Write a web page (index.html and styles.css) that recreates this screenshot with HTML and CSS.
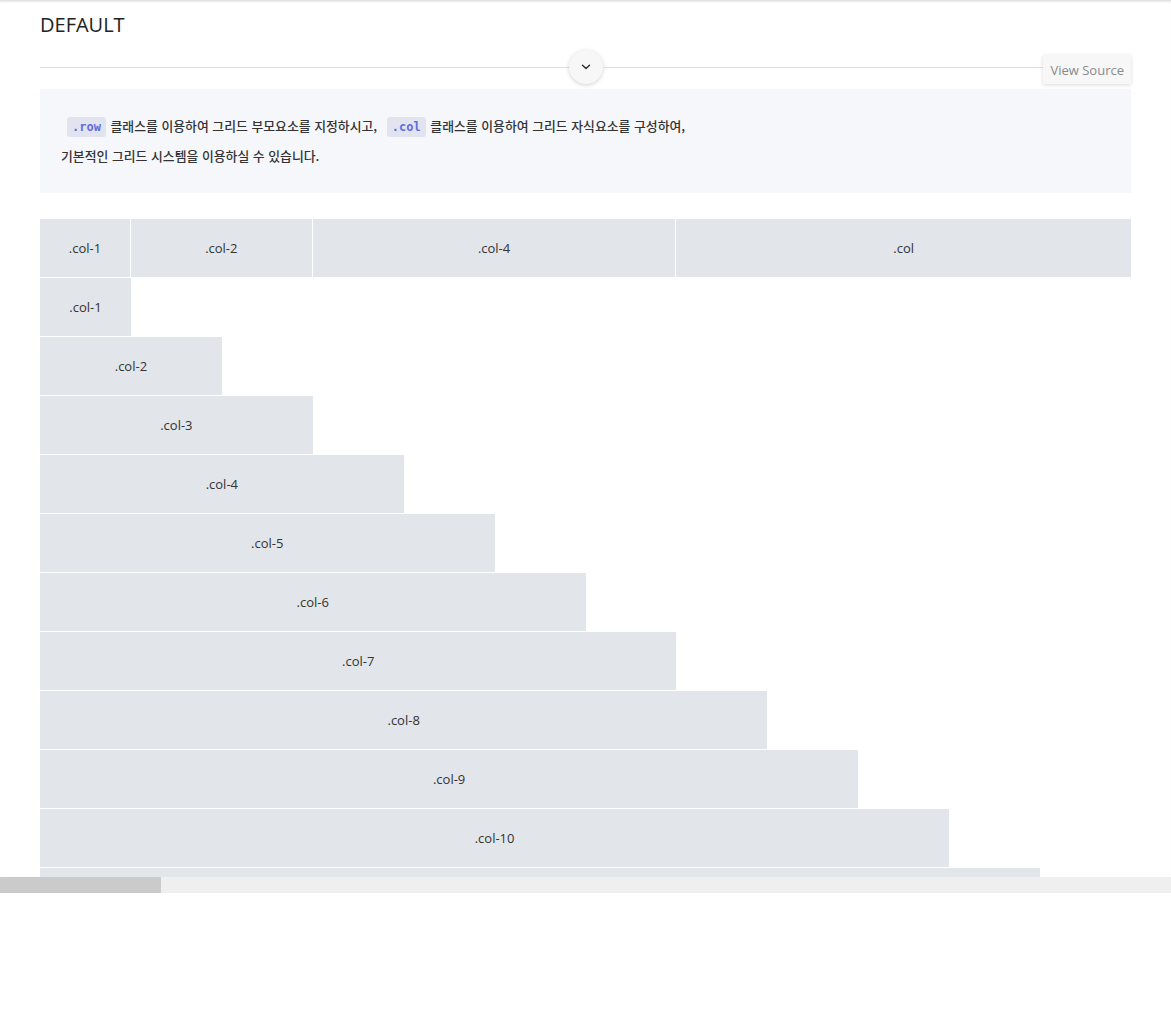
FILE: index.html
```html
<!DOCTYPE html>
<html lang="ko">
<head>
<meta charset="utf-8">
<title>Grid Default</title>
<link rel="stylesheet" href="styles.css">
</head>
<body>
<div class="viewport">
  <div class="page">
    <h2 class="title">DEFAULT</h2>
    <div class="divider">
      <span class="line"></span>
      <button class="toggle" type="button" aria-label="toggle">
        <svg width="10" height="6" viewBox="0 0 10 6"><path d="M1.5 1.2 L5 4.5 L8.5 1.2" fill="none" stroke="#333" stroke-width="1.5" stroke-linecap="round" stroke-linejoin="round"/></svg>
      </button>
      <span class="line"></span>
      <button class="view-source" type="button">View Source</button>
    </div>
    <div class="intro">
      <p><code>.row</code> 클래스를 이용하여 그리드 부모요소를 지정하시고, <code>.col</code> 클래스를 이용하여 그리드 자식요소를 구성하여,</p>
      <p>기본적인 그리드 시스템을 이용하실 수 있습니다.</p>
    </div>
    <div class="grid">
      <div class="row">
        <div class="col col-1">.col-1</div>
        <div class="col col-2">.col-2</div>
        <div class="col col-4">.col-4</div>
        <div class="col col-fill">.col</div>
      </div>
      <div class="row"><div class="col col-1">.col-1</div></div>
      <div class="row"><div class="col col-2">.col-2</div></div>
      <div class="row"><div class="col col-3">.col-3</div></div>
      <div class="row"><div class="col col-4">.col-4</div></div>
      <div class="row"><div class="col col-5">.col-5</div></div>
      <div class="row"><div class="col col-6">.col-6</div></div>
      <div class="row"><div class="col col-7">.col-7</div></div>
      <div class="row"><div class="col col-8">.col-8</div></div>
      <div class="row"><div class="col col-9">.col-9</div></div>
      <div class="row"><div class="col col-10">.col-10</div></div>
      <div class="row"><div class="col col-11">.col-11</div></div>
      <div class="row"><div class="col col-12">.col-12</div></div>
    </div>
  </div>
</div>
<div class="hscroll"><div class="hscroll-thumb"></div></div>
</body>
</html>
```
FILE: styles.css
```css
html, body {
  margin: 0;
  padding: 0;
  background: #fff;
}

body {
  font-family: "Open Sans", "Noto Sans CJK KR", sans-serif;
  font-size: 13px;
  color: #333;
}

.viewport {
  height: 877px;
  overflow: hidden;
  box-shadow: inset 0 3px 3px -2px rgba(0, 0, 0, 0.18);
}

.hscroll {
  height: 16px;
  background: #efefef;
}

.hscroll-thumb {
  width: 161px;
  height: 100%;
  background: #cbcbcb;
}

.page {
  width: 1091px;
  padding: 10px 40px 0;
}

.title {
  margin: 0;
  font-size: 20px;
  font-weight: 400;
  line-height: 30px;
  color: #222;
}

.divider {
  position: relative;
  display: flex;
  align-items: center;
  height: 34px;
  margin-top: 10px;
}

.line {
  flex: 1;
  height: 1px;
  background: #dedede;
}

.toggle {
  width: 34px;
  height: 34px;
  padding: 0;
  border: none;
  border-radius: 50%;
  background: #f7f7f7;
  box-shadow: 0 1px 4px rgba(0, 0, 0, 0.18);
  display: flex;
  align-items: center;
  justify-content: center;
}

.view-source {
  position: absolute;
  right: 0;
  top: 5px;
  height: 29px;
  padding: 0 7px;
  border: none;
  background: #f7f7f7;
  box-shadow: 0 1px 4px rgba(0, 0, 0, 0.15);
  font-family: "Open Sans", sans-serif;
  font-size: 13px;
  color: #8a8a8a;
}

.intro {
  margin-top: 5px;
  padding: 22px 21px;
  background: #f6f7fb;
  font-family: "Noto Sans CJK KR", sans-serif;
  font-size: 12.87px;
  font-weight: 500;
  line-height: 30px;
  color: #333;
}

.intro p {
  margin: 0;
}

.intro code {
  display: inline-block;
  margin: 0 1px 0 6px;
  padding: 0 5px;
  height: 20px;
  line-height: 20px;
  border-radius: 3px;
  background: #e1e4ee;
  color: #5e6ee0;
  font-family: "DejaVu Sans Mono", monospace;
  font-size: 12px;
  font-weight: 700;
}

.grid {
  margin-top: 26px;
}

.row {
  display: flex;
}

.col {
  box-sizing: border-box;
  height: 59px;
  display: flex;
  align-items: center;
  justify-content: center;
  background: #e2e5ea;
  border-bottom: 1px solid #fff;
  background-clip: padding-box;
}

.col:not(:last-child) {
  border-right: 1px solid #fff;
}

.col-1 { width: calc(100% / 12 * 1); }
.col-2 { width: calc(100% / 12 * 2); }
.col-3 { width: calc(100% / 12 * 3); }
.col-4 { width: calc(100% / 12 * 4); }
.col-5 { width: calc(100% / 12 * 5); }
.col-6 { width: calc(100% / 12 * 6); }
.col-7 { width: calc(100% / 12 * 7); }
.col-8 { width: calc(100% / 12 * 8); }
.col-9 { width: calc(100% / 12 * 9); }
.col-10 { width: calc(100% / 12 * 10); }
.col-11 { width: calc(100% / 12 * 11); }
.col-12 { width: 100%; }
.col-fill { flex: 1; }
```
